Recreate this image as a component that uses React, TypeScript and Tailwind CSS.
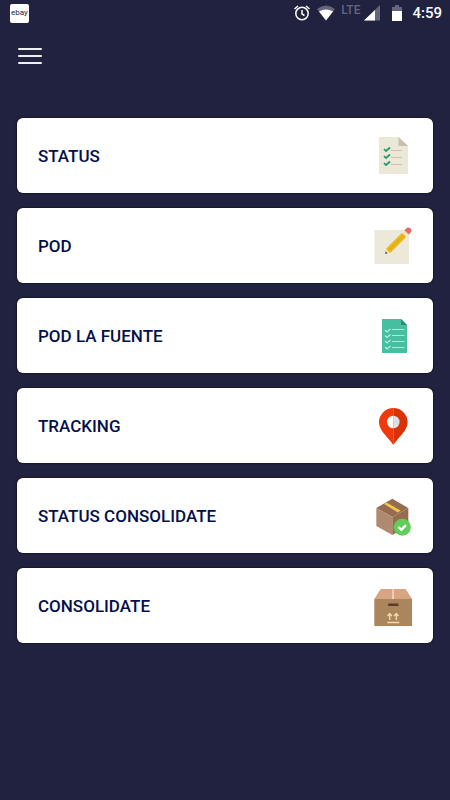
import type { ReactNode } from 'react'

function StatusIcon() {
  return (
    <svg viewBox="0 0 40 40" className="h-10 w-10" fill="none" aria-hidden="true">
      <path d="M6 1h19.500l9.500 9v28H6z" fill="#ece8d8" />
      <path d="M25.500 1v9H35z" fill="#c8bfaf" />
      <path d="M11 13l2 2 4-3.500M11 20l2 2 4-3.500M11 27l2 2 4-3.500" stroke="#1f9a70" strokeWidth="1.700" />
      <path d="M18 14.500h11M18 21.500h11M18 28.500h11" stroke="#d3bfaa" />
    </svg>
  )
}

function PodIcon() {
  return (
    <svg viewBox="0 0 40 40" className="h-10 w-10" fill="none" aria-hidden="true">
      <path d="M1.500 4H36v34H1.500z" fill="#ece9da" />
      <g transform="translate(12 28) rotate(-45)">
        <path d="M0 0l5-3v6z" fill="#f6e3ad" />
        <path d="M0 0l2.400-1.400v2.800z" fill="#4a4e58" />
        <path d="M4.500-3H27v6H4.500z" fill="#e9b820" />
        <path d="M4.500-1H27v2H4.500z" fill="#e4b018" />
        <path d="M27-3h3.500v6H27z" fill="#f5e4b8" />
        <path d="M30.500-3h2.500a3 3 0 0 1 0 6h-2.500z" fill="#dc6b69" />
      </g>
    </svg>
  )
}

function ChecklistIcon() {
  return (
    <svg viewBox="0 0 40 40" className="h-10 w-10" fill="none" aria-hidden="true">
      <path d="M9 3h19l6 6v28H9z" fill="#45bf9f" />
      <path d="M28 3v6h6z" fill="#2b8f78" />
      <path
        d="M12 14l2 2 3.500-3M12 19.500l2 2 3.500-3M12 25l2 2 3.500-3M12 31l2 2 3.500-3"
        stroke="#b5f0df"
        strokeWidth="1.200"
      />
      <path d="M19 13.500h12.500M19 19.500h12.500M19 25.500h12.500M19 31.500h12.500" stroke="#a9ecd9" strokeWidth="1.200" />
    </svg>
  )
}

function PinIcon() {
  return (
    <svg viewBox="0 0 40 40" className="h-10 w-10" aria-hidden="true">
      <path d="M20.300 2A14.300 14.300 0 0 0 6 16.300C6 25 15 31 20.300 39z" fill="#f03a0c" />
      <path d="M20.300 2a14.300 14.300 0 0 1 14.300 14.300C34.600 25 25.600 31 20.300 39z" fill="#d93205" />
      <path d="M20.300 9.700a6.300 6.300 0 0 0 0 12.600z" fill="#fff" />
      <path d="M20.300 9.700a6.300 6.300 0 0 1 0 12.600z" fill="#dfe0e6" />
    </svg>
  )
}

function ParcelCheckIcon() {
  return (
    <svg viewBox="0 0 40 40" className="h-10 w-10" fill="none" aria-hidden="true">
      <path d="M19.300 2.700l16 9.300-16 9-16-9z" fill="#956c50" />
      <path d="M3.300 12l16 9v18l-16-9z" fill="#b08a70" />
      <path d="M35.300 12l-16 9v18l16-9z" fill="#966c50" />
      <path d="M13.500 6.500l14 8-2.500 2L11 8z" fill="#f3c64b" />
      <circle cx="29.300" cy="31.300" r="8.500" fill="#62cd58" />
      <path d="M25.500 31l2.800 2.800 4.700-4.700" stroke="#fff" strokeWidth="2.400" />
    </svg>
  )
}

function BoxIcon() {
  return (
    <svg viewBox="0 0 40 40" className="h-10 w-10" fill="none" aria-hidden="true">
      <path d="M7.700 3h25L39 13H1.300z" fill="#d5a584" />
      <path d="M19.200 3h1.800v10h-2z" fill="#f0d0b4" />
      <path d="M1.300 13H39v27H1.300z" fill="#ab855b" />
      <rect x="15" y="17.500" width="10.500" height="2.500" rx="1" fill="#5b3b2b" />
      <path
        d="M16.700 34v-6M14.500 30l2.200-2.500 2.200 2.500M23.300 34v-6M21.100 30l2.200-2.500 2.200 2.500M14.300 36.500h12"
        stroke="#f5d9ad"
        strokeWidth="1.300"
      />
    </svg>
  )
}

const menuItems: { label: string; icon: ReactNode }[] = [
  { label: 'STATUS', icon: <StatusIcon /> },
  { label: 'POD', icon: <PodIcon /> },
  { label: 'POD LA FUENTE', icon: <ChecklistIcon /> },
  { label: 'TRACKING', icon: <PinIcon /> },
  { label: 'STATUS CONSOLIDATE', icon: <ParcelCheckIcon /> },
  { label: 'CONSOLIDATE', icon: <BoxIcon /> },
]

function StatusBar() {
  return (
    <div className="flex h-6 items-center justify-between pt-0.5 pr-2 pl-2.5">
      <div className="flex h-[19px] w-[19px] items-center justify-center rounded-xs bg-white text-[8px] leading-none text-[#22223c]">
        ebay
      </div>
      <div className="flex h-5 items-center">
        <svg viewBox="0 0 16 16" className="mr-[7px] h-4 w-4" fill="none" stroke="#fff" strokeWidth="1.500" aria-hidden="true">
          <circle cx="8" cy="8.500" r="6.200" />
          <path d="M8 5v4l2.500 1.500M0.500 4l3.500-3M15.500 4L12 1" />
        </svg>
        <svg viewBox="0 0 18 16" className="mr-1.5 h-4 w-[18px]" aria-hidden="true">
          <path d="M0 4Q9-3 18 4L9 15.500z" fill="#65667c" />
          <path d="M2 6.500q7-4 14 0l-7 9z" fill="#fff" />
        </svg>
        <span className="mr-1 self-start text-[12px] leading-[14px] font-medium text-[#65667c]">LTE</span>
        <svg viewBox="0 0 16 16" className="mr-3 h-4 w-4" aria-hidden="true">
          <path d="M16 0v15.500H0z" fill="#65667c" />
          <path d="M11 5v10.500H0z" fill="#fff" />
        </svg>
        <svg viewBox="0 0 10 16" className="mr-2.5 h-4 w-2.5" aria-hidden="true">
          <path d="M3 0h4v2h3v4H0V2h3z" fill="#65667c" />
          <path d="M0 6h10v10H0z" fill="#fff" />
        </svg>
        <span className="text-[15px] leading-5 font-medium text-white">4:59</span>
      </div>
    </div>
  )
}

export default function App() {
  return (
    <div className="min-h-screen bg-[#20223f] font-['Roboto',sans-serif]">
      <StatusBar />
      <header className="px-4 pt-5">
        <button type="button" aria-label="Menu" className="flex h-6 w-7 flex-col justify-center gap-[5px] px-0.5">
          <span className="h-0.5 w-full rounded-full bg-[#f0f0f2]" />
          <span className="h-0.5 w-full rounded-full bg-[#f0f0f2]" />
          <span className="h-0.5 w-full rounded-full bg-[#f0f0f2]" />
        </button>
      </header>
      <main className="flex flex-col gap-[15px] px-[17px] pt-[50px] pb-8">
        {menuItems.map((item) => (
          <button
            key={item.label}
            type="button"
            className="flex h-[75px] items-center justify-between rounded-md bg-white pr-5 pl-[21px] text-left shadow-[0_0_2px_#000000]"
          >
            <span className="text-[17px] leading-6 font-medium text-[#04104a]">{item.label}</span>
            {item.icon}
          </button>
        ))}
      </main>
    </div>
  )
}
